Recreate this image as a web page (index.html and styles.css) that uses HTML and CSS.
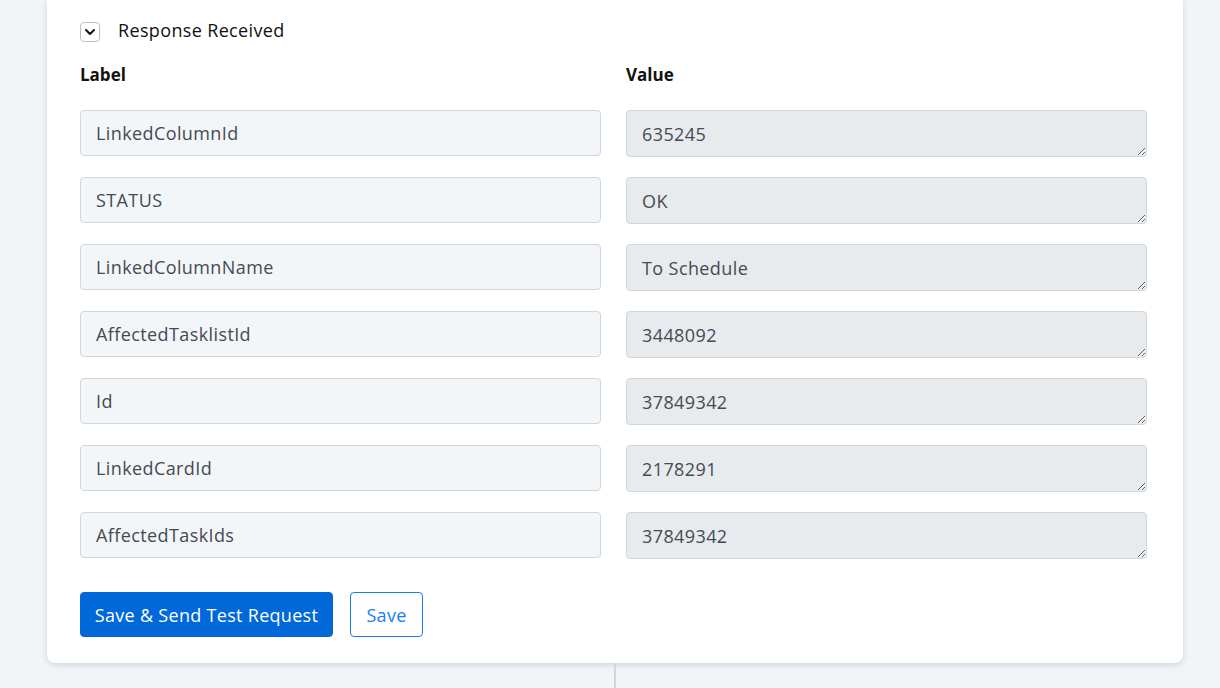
FILE: index.html
```html
<!DOCTYPE html>
<html>
<head>
<meta charset="utf-8">
<link rel="stylesheet" href="styles.css">
</head>
<body>
<div class="card">
  <div class="section-head">
    <span class="toggle"><svg width="12" height="8" viewBox="0 0 12 8"><path d="M2 2 L6 6 L10 2" fill="none" stroke="#111" stroke-width="2" stroke-linecap="round" stroke-linejoin="round"/></svg></span>
    <span class="section-title">Response Received</span>
  </div>
  <div class="grid">
    <div class="col-head">Label</div>
    <div class="col-head">Value</div>
    <input class="field label-field" readonly value="LinkedColumnId">
    <textarea class="field value-field" readonly>635245</textarea>
    <input class="field label-field" readonly value="STATUS">
    <textarea class="field value-field" readonly>OK</textarea>
    <input class="field label-field" readonly value="LinkedColumnName">
    <textarea class="field value-field" readonly>To Schedule</textarea>
    <input class="field label-field" readonly value="AffectedTasklistId">
    <textarea class="field value-field" readonly>3448092</textarea>
    <input class="field label-field" readonly value="Id">
    <textarea class="field value-field" readonly>37849342</textarea>
    <input class="field label-field" readonly value="LinkedCardId">
    <textarea class="field value-field" readonly>2178291</textarea>
    <input class="field label-field" readonly value="AffectedTaskIds">
    <textarea class="field value-field" readonly>37849342</textarea>
  </div>
  <div class="actions">
    <button class="btn primary">Save &amp; Send Test Request</button>
    <button class="btn outline">Save</button>
  </div>
</div>
<div class="connector"></div>
</body>
</html>
```
FILE: styles.css
```css
html, body {
  margin: 0;
  padding: 0;
  background: #f2f5f8;
  font-family: "Open Sans", Lato, sans-serif;
  height: 100%;
  overflow: hidden;
}
.card {
  margin-left: 47px;
  width: 1136px;
  box-sizing: border-box;
  background: #fff;
  border-radius: 0 0 8px 8px;
  box-shadow: 0 2px 6px rgba(30, 40, 60, 0.16);
  padding: 22px 36px 26px 33px;
}
.section-head {
  display: flex;
  align-items: center;
  height: 20px;
}
.toggle {
  width: 18px;
  height: 18px;
  border: 1px solid #b9bec6;
  border-radius: 4px;
  display: flex;
  align-items: center;
  justify-content: center;
  box-sizing: content-box;
}
.section-title {
  margin-left: 18px;
  font-size: 18px;
  letter-spacing: 0.35px;
  line-height: 20px;
  color: #111;
  position: relative;
  top: -2px;
}
.grid {
  display: grid;
  grid-template-columns: 521px 521px;
  column-gap: 25px;
  row-gap: 20px;
  margin-top: 23px;
}
.col-head {
  font-weight: 700;
  font-size: 17px;
  line-height: 20px;
  color: #111;
  height: 20px;
  margin-bottom: 5px;
}
.field {
  box-sizing: border-box;
  width: 100%;
  font-family: inherit;
  font-size: 18px;
  letter-spacing: 0.4px;
  color: #454a52;
  border: 1px solid #d1d6dd;
  border-radius: 4px;
  padding: 0 15px;
  margin: 0;
  outline: none;
}
.label-field {
  height: 46px;
  background: #f3f6f9;
}
.value-field {
  height: 47px;
  background: #e8ebee;
  padding-top: 11px;
  line-height: 24px;
  resize: vertical;
  display: block;
  overflow: hidden;
}
.actions {
  display: flex;
  gap: 17px;
  margin-top: 33px;
}
.btn {
  height: 45px;
  font-family: inherit;
  font-size: 18px;
  font-weight: 500;
  letter-spacing: 0.3px;
  border-radius: 4px;
  padding: 0 8px;
  cursor: pointer;
}
.primary {
  background: #0068d9;
  color: #fff;
  border: 1px solid #0068d9;
  width: 253px;
}
.outline {
  background: #fff;
  color: #1a7cf0;
  border: 1px solid #1a7cf0;
  width: 73px;
}
.connector {
  width: 2px;
  height: 40px;
  background: #d3d7dd;
  margin-left: 614px;
}
```
